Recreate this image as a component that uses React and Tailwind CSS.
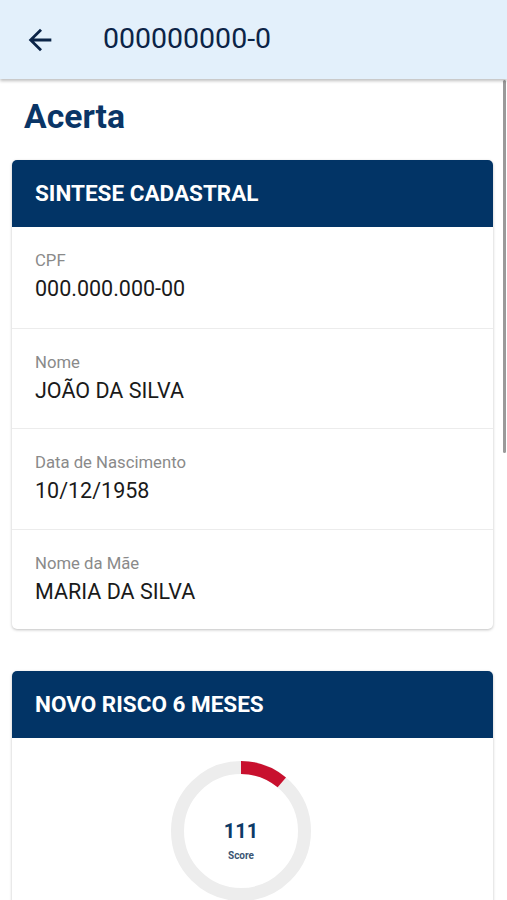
import React from "react";

const rows = [
  { label: "CPF", value: "000.000.000-00" },
  { label: "Nome", value: "JOÃO DA SILVA" },
  { label: "Data de Nascimento", value: "10/12/1958" },
  { label: "Nome da Mãe", value: "MARIA DA SILVA" },
];

function Donut({ value, max }) {
  const r = 63.5;
  const c = 2 * Math.PI * r;
  const frac = value / max;
  return (
    <div className="relative w-[140px] h-[140px]">
      <svg width="140" height="140" viewBox="0 0 140 140" className="absolute inset-0">
        <circle cx="70" cy="70" r={r} fill="none" stroke="#ededed" strokeWidth="13" />
        <circle
          cx="70"
          cy="70"
          r={r}
          fill="none"
          stroke="#c8102e"
          strokeWidth="13"
          strokeDasharray={`${c * frac} ${c}`}
          transform="rotate(-90 70 70)"
        />
      </svg>
      <div className="absolute left-0 right-0 top-[58px] text-center text-[20px] leading-[24px] font-bold text-[#0d3a66]">
        {value}
      </div>
      <div className="absolute left-0 right-0 top-[89px] text-center text-[10px] leading-[12px] font-bold text-[#3b5573]">
        Score
      </div>
    </div>
  );
}

export default function App() {
  return (
    <div
      className="relative w-[507px] h-[900px] overflow-hidden bg-white"
      style={{ fontFamily: "Roboto, 'Noto Sans', sans-serif" }}
    >
      <header className="relative z-10 h-[79px] bg-[#e3f0fb] flex items-center shadow-[0_2px_3px_rgba(0,0,0,0.25)]">
        <svg width="34" height="34" viewBox="0 0 24 24" className="ml-[23px]" fill="#0b2447">
          <path d="M20 11H7.83l5.59-5.59L12 4l-8 8 8 8 1.41-1.41L7.83 13H20v-2z" />
        </svg>
        <h1 className="ml-[46px] text-[28.5px] leading-none text-[#0b2447] font-normal">000000000-0</h1>
      </header>

      <div className="absolute right-[1px] top-[80px] w-[3px] h-[373px] bg-[#9a9a9a] rounded-sm" />

      <main className="px-[12px] pr-[14px]">
        <h2 className="pl-[12px] pt-[18px] text-[33.7px] leading-[40px] font-bold text-[#0a3566]">Acerta</h2>

        <section className="mt-[23px] rounded-[5px] bg-white shadow-[0_1px_3px_rgba(0,0,0,0.25)] overflow-hidden">
          <div className="h-[67px] bg-[#023466] flex items-center pl-[23px]">
            <span className="text-white font-bold text-[22.5px] leading-none">SINTESE CADASTRAL</span>
          </div>
          {rows.map((r, i) => (
            <div
              key={r.label}
              className={`h-[100.5px] pl-[23px] pt-[24px] ${i > 0 ? "border-t border-[#ececec]" : ""}`}
            >
              <div className="text-[16.7px] leading-[20px] text-[#8a8a8a]">{r.label}</div>
              <div className="mt-[4px] text-[21.5px] leading-[28px] text-[#1a1a1a]">{r.value}</div>
            </div>
          ))}
        </section>

        <section className="mt-[42px] rounded-[5px] bg-white shadow-[0_1px_3px_rgba(0,0,0,0.25)] overflow-hidden">
          <div className="h-[67px] bg-[#023466] flex items-center pl-[23px]">
            <span className="text-white font-bold text-[22.5px] leading-none">NOVO RISCO 6 MESES</span>
          </div>
          <div className="pt-[23px] pb-[20px] pl-[159px]">
            <Donut value={111} max={1000} />
          </div>
        </section>
      </main>
    </div>
  );
}
